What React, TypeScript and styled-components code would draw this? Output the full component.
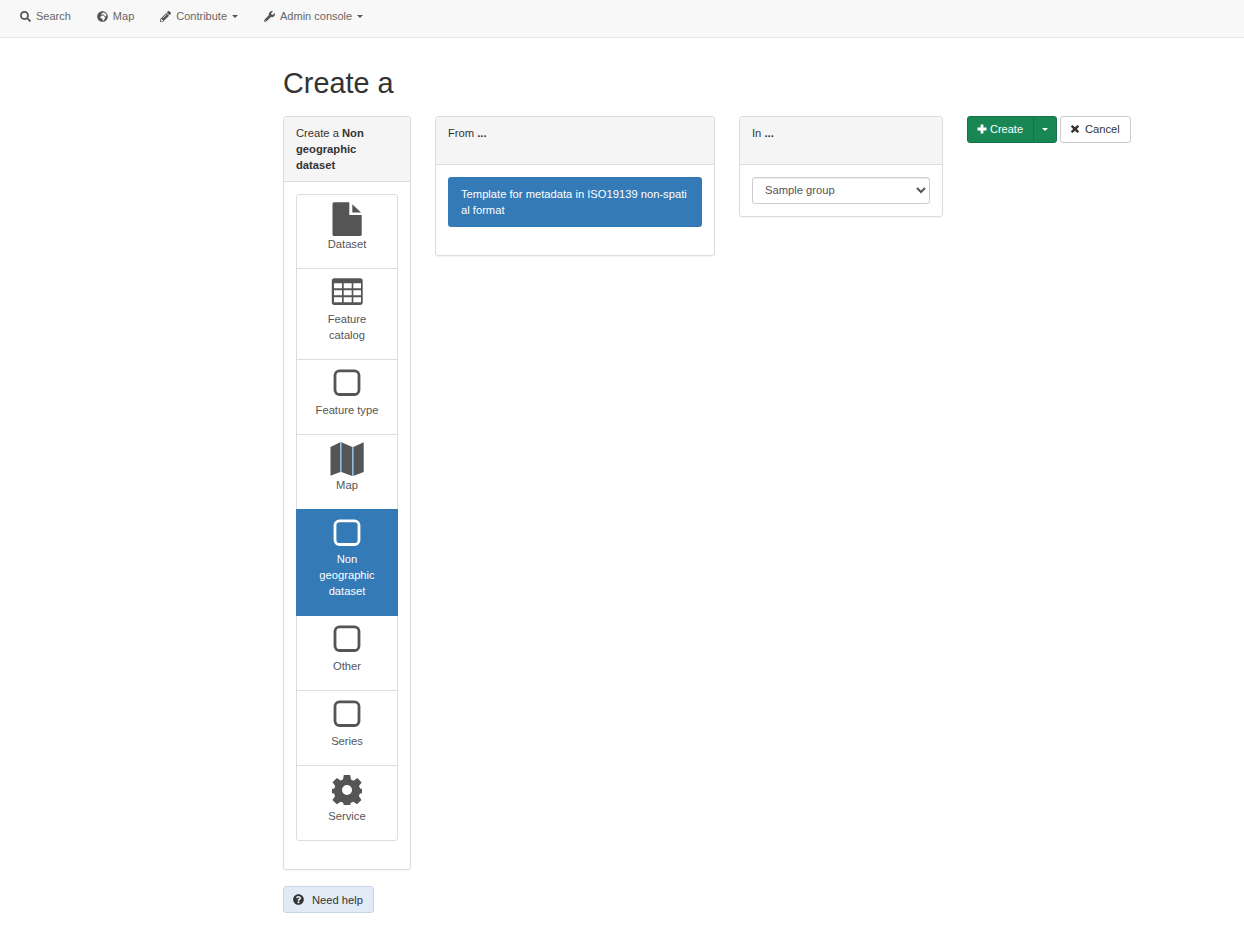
import React from 'react';
import styled, { createGlobalStyle } from 'styled-components';
import { FaSearch, FaGlobeAfrica, FaPencilAlt, FaWrench, FaQuestionCircle } from 'react-icons/fa';

const GlobalStyle = createGlobalStyle`
  html, body { margin: 0; background: #fff; }
  body {
    font-family: "Liberation Sans", Arial, sans-serif;
    font-size: 11.2px;
    line-height: 16px;
    color: #333;
  }
  * { box-sizing: border-box; }
`;

//navbar
const NavBar = styled.nav`
  display: flex;
  height: 38px;
  padding-left: 7px;
  background: #f8f8f8;
  border-bottom: 1px solid #e7e7e7;
`;

const NavLink = styled.a`
  display: flex;
  align-items: center;
  gap: 5px;
  height: 32px;
  padding: 0 13px;
  font-size: 11px;
  color: #666;
  svg { color: #555; width: 11px; height: 11px; }
`;

const Caret = styled.span<{ $color?: string }>`
  display: inline-block;
  width: 0;
  height: 0;
  border-top: 3.5px solid ${(p) => p.$color || '#555'};
  border-left: 3.5px solid transparent;
  border-right: 3.5px solid transparent;
`;

//page
const Page = styled.main`
  padding-left: 283px;
`;

const Title = styled.h1`
  margin: 0;
  padding-top: 28px;
  height: 78px;
  font-size: 28.8px;
  line-height: 34px;
  font-weight: 400;
  color: #333;
`;

const Columns = styled.div`
  display: flex;
  align-items: flex-start;
  gap: 24px;
`;

const Panel = styled.section<{ $width: number }>`
  width: ${(p) => p.$width}px;
  flex: none;
  background: #fff;
  border: 1px solid #ddd;
  border-radius: 3px;
  box-shadow: 0 1px 1px rgba(0, 0, 0, 0.05);
`;

const PanelHead = styled.header`
  min-height: 48px;
  padding: 8px 12px;
  background: #f5f5f5;
  border-bottom: 1px solid #ddd;
  border-radius: 2px 2px 0 0;
`;

const PanelBody = styled.div<{ $top?: number }>`
  padding: ${(p) => p.$top ?? 12}px 12px 12px;
`;

//type list
const TypeList = styled.div`
  display: flex;
  flex-direction: column;
  margin-bottom: 16px;
`;

const TypeItem = styled.a<{ $active?: boolean }>`
  position: relative;
  z-index: ${(p) => (p.$active ? 2 : 1)};
  display: block;
  margin-bottom: -1px;
  padding: 7px 12px 16px;
  text-align: center;
  color: ${(p) => (p.$active ? '#fff' : '#555')};
  background: ${(p) => (p.$active ? '#337ab7' : '#fff')};
  border: 1px solid ${(p) => (p.$active ? '#337ab7' : '#ddd')};
  &:first-child { border-radius: 3px 3px 0 0; }
  &:last-child { border-radius: 0 0 3px 3px; margin-bottom: 0; }
  svg { display: block; margin: 0 auto 0.8px; }
`;

const TemplateButton = styled.a`
  display: block;
  margin-bottom: 16px;
  padding: 9px 13px;
  color: #fff;
  background: #337ab7;
  border-radius: 3px;
  word-break: break-all;
`;

const GroupSelect = styled.select`
  display: block;
  width: 100%;
  height: 27px;
  padding: 0 8px 2px;
  font: inherit;
  color: #555;
  background: #fff;
  border: 1px solid #ccc;
  border-radius: 3px;
  box-shadow: inset 0 1px 1px rgba(0, 0, 0, 0.075);
`;

//buttons
const Actions = styled.div`
  display: flex;
  flex: none;
  gap: 3px;
`;

const SplitGroup = styled.div`
  display: flex;
`;

const Button = styled.button`
  display: flex;
  align-items: center;
  height: 27px;
  font: inherit;
  border: 1px solid transparent;
`;

const CreateButton = styled(Button)`
  gap: 3px;
  width: 67px;
  padding: 0 0 2px 9px;
  font-size: 11px;
  color: #fff;
  background: #198754;
  border-color: #157347;
  border-radius: 3px 0 0 3px;
`;

const CreateToggle = styled(Button)`
  justify-content: center;
  width: 24px;
  margin-left: -1px;
  padding: 0;
  background: #198754;
  border-color: #157347;
  border-radius: 0 3px 3px 0;
`;

const CancelButton = styled(Button)`
  gap: 5px;
  width: 71px;
  padding: 0 0 2px 9px;
  color: #333;
  background: #fff;
  border-color: #ccc;
  border-radius: 3px;
`;

const HelpButton = styled(Button)`
  gap: 8px;
  width: 91px;
  margin-top: 16px;
  padding: 1px 0 0 9px;
  color: #333;
  background: #e1ebf6;
  border-color: #c6d6e6;
  border-radius: 3px;
  svg { width: 11px; height: 11px; }
`;

//button glyphs, heavier than the package ones
const PlusGlyph = () => (
  <svg width="10" height="10" viewBox="0 0 10 10" fill="currentColor">
    <path d="M3.6.5H6.4V3.6H9.5V6.4H6.4V9.5H3.6V6.4H.5V3.6H3.6Z" />
  </svg>
);

const TimesGlyph = () => (
  <svg width="10" height="10" viewBox="0 0 10 10" fill="currentColor">
    <path d="M2.4 1 5 3.3 7.6 1 9.2 2.6 6.9 5 9.2 7.4 7.6 9 5 6.7 2.4 9 .8 7.4 3.1 5 .8 2.6Z" />
  </svg>
);

//big icons, all drawn on the same 34px square
const Icon = ({ children }: { children: React.ReactNode }) => (
  <svg width="34" height="34" viewBox="0 0 34 34" fill="currentColor">
    {children}
  </svg>
);

const FileIcon = () => (
  <Icon>
    <path d="M4 .3H19.3V13H31.7V32.5a1.5 1.5 0 0 1-1.5 1.5H4a1.5 1.5 0 0 1-1.5-1.5V1.8A1.5 1.5 0 0 1 4 .3Z" />
    <path d="M22.3 2.3 31 10.5H22.3Z" />
  </Icon>
);

const TableIcon = () => (
  <Icon>
    <path
      fillRule="evenodd"
      d="M4.5 2.3H30a2.7 2.7 0 0 1 2.7 2.7V26.3A2.7 2.7 0 0 1 30 29H4.5a2.7 2.7 0 0 1-2.7-2.7V5a2.7 2.7 0 0 1 2.7-2.7ZM4 7.3V12.3H12V7.3ZM13.7 7.3V12.3H21.7V7.3ZM23.3 7.3V12.3H31V7.3ZM4 14.3V19.3H12V14.3ZM13.7 14.3V19.3H21.7V14.3ZM23.3 14.3V19.3H31V14.3ZM4 21.3V26.3H12V21.3ZM13.7 21.3V26.3H21.7V21.3ZM23.3 21.3V26.3H31V21.3Z"
    />
  </Icon>
);

const SquareIcon = () => (
  <Icon>
    <rect x="5" y="3.8" width="24" height="23.7" rx="4.5" fill="none" stroke="currentColor" strokeWidth="2.8" />
  </Icon>
);

const MapIcon = () => (
  <Icon>
    <path d="M.5 5 10.2.3V30L.5 33.8Z" />
    <path d="M11.3.3 22.3 5V34L11.3 30Z" />
    <path d="M23.3 5 33.7.3V30L23.3 34Z" />
    <path d="M10.7 0V30.5M22.8 4.5V34" stroke="#7fb5e0" strokeWidth="1" fill="none" />
  </Icon>
);

const GearIcon = () => (
  <Icon>
    <path
      fillRule="evenodd"
      d="M17 12a5 5 0 1 0 0 10a5 5 0 0 0 0-10ZM13.8 2H20.2L21 6.6 23.6 7.7 27.4 5 31.6 9.4 29 13 30.1 15.6 32 16V20.3L29.9 20.6 28.9 23.2 31.5 27 27 31.3 23.3 28.7 20.8 29.7 20.2 32H13.8L13.2 29.7 10.6 28.7 6.8 31.3 2.4 27 5 23.2 4.1 20.6 2 20.3V15.9L4.3 15.4 5.2 12.9 2.5 9.3 6.9 5 10.5 7.6 13 6.6Z"
    />
  </Icon>
);

const types = [
  { label: 'Dataset', icon: <FileIcon /> },
  { label: 'Feature catalog', icon: <TableIcon /> },
  { label: 'Feature type', icon: <SquareIcon /> },
  { label: 'Map', icon: <MapIcon /> },
  { label: 'Non geographic dataset', icon: <SquareIcon />, active: true },
  { label: 'Other', icon: <SquareIcon /> },
  { label: 'Series', icon: <SquareIcon /> },
  { label: 'Service', icon: <GearIcon /> },
];

function App() {
  return (
    <>
      <GlobalStyle />
      <NavBar>
        <NavLink><FaSearch />Search</NavLink>
        <NavLink><FaGlobeAfrica />Map</NavLink>
        <NavLink><FaPencilAlt />Contribute <Caret /></NavLink>
        <NavLink><FaWrench />Admin console <Caret /></NavLink>
      </NavBar>
      <Page>
        <Title>Create a</Title>
        <Columns>
          <Panel $width={128}>
            <PanelHead>Create a <b>Non geographic dataset</b></PanelHead>
            <PanelBody $top={11.5}>
              <TypeList>
                {types.map((t) => (
                  <TypeItem key={t.label} $active={t.active}>
                    {t.icon}
                    {t.label}
                  </TypeItem>
                ))}
              </TypeList>
            </PanelBody>
          </Panel>
          <Panel $width={280}>
            <PanelHead>From <b>...</b></PanelHead>
            <PanelBody>
              <TemplateButton>Template for metadata in ISO19139 non-spatial format</TemplateButton>
            </PanelBody>
          </Panel>
          <Panel $width={204}>
            <PanelHead>In <b>...</b></PanelHead>
            <PanelBody>
              <GroupSelect defaultValue="sample">
                <option value="sample">Sample group</option>
              </GroupSelect>
            </PanelBody>
          </Panel>
          <Actions>
            <SplitGroup>
              <CreateButton><PlusGlyph />Create</CreateButton>
              <CreateToggle><Caret $color="#fff" /></CreateToggle>
            </SplitGroup>
            <CancelButton><TimesGlyph />Cancel</CancelButton>
          </Actions>
        </Columns>
        <HelpButton><FaQuestionCircle />Need help</HelpButton>
      </Page>
    </>
  );
}

export default App;
